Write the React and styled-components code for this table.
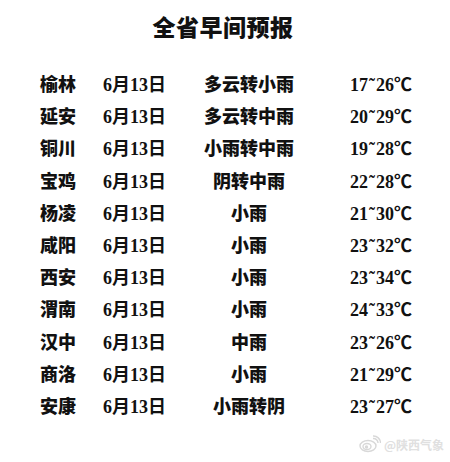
import React from 'react'
import styled, { createGlobalStyle } from 'styled-components'

const GlobalStyle = createGlobalStyle`
  html, body {
    margin: 0;
    padding: 0;
    background: #ffffff;
  }
  body {
    font-family: "Liberation Serif", "Noto Sans CJK SC", serif;
  }
`

const Page = styled.div`
  width: 450px;
  height: 462px;
  background: #ffffff;
  color: #111111;
  padding-top: 11px;
  box-sizing: border-box;
  overflow: hidden;
`

const Title = styled.h1`
  margin: 0 0 0 -4px;
  text-align: center;
  font-family: "Noto Sans CJK SC", sans-serif;
  font-size: 23px;
  font-weight: 900;
  line-height: 30px;
  letter-spacing: 0.5px;
`

const Table = styled.div`
  margin-top: 26px;
  padding-left: 40px;
  display: grid;
  grid-template-columns: 63px 97px 98px 1fr;
  grid-auto-rows: 32.2px;
  align-items: center;
  font-size: 18px;
  font-weight: 700;
`

const Cell = styled.div`
  white-space: nowrap;
  text-align: ${(p) => p.$align || 'left'};
  padding-left: ${(p) => p.$indent || 0}px;
  font-family: ${(p) => (p.$cjk ? '"Noto Sans CJK SC", sans-serif' : '"Liberation Serif", "Noto Sans CJK SC", serif')};
  font-weight: ${(p) => (p.$cjk ? 900 : 700)};
`

const Tilde = styled.span`
  display: inline-block;
  margin: 0 1px;
`

const Footer = styled.div`
  display: flex;
  justify-content: flex-end;
  align-items: center;
  gap: 3px;
  margin-top: 14px;
  padding-right: 6px;
  color: #e0e0e0;
  font-family: "Noto Sans CJK SC", sans-serif;
  font-size: 12px;
  font-weight: 700;
`

const rows = [
  ['榆林', '多云转小雨', '17', '26'],
  ['延安', '多云转中雨', '20', '29'],
  ['铜川', '小雨转中雨', '19', '28'],
  ['宝鸡', '阴转中雨', '22', '28'],
  ['杨凌', '小雨', '21', '30'],
  ['咸阳', '小雨', '23', '32'],
  ['西安', '小雨', '23', '34'],
  ['渭南', '小雨', '24', '33'],
  ['汉中', '中雨', '23', '26'],
  ['商洛', '小雨', '21', '29'],
  ['安康', '小雨转阴', '23', '27'],
]

const WeiboLogo = () => (
  <svg width="22" height="18" viewBox="0 0 22 18" fill="none" stroke="#d8d8d8" strokeWidth="1.4">
    <ellipse cx="9" cy="11" rx="8" ry="5.5" />
    <ellipse cx="8" cy="11.5" rx="4" ry="3" />
    <circle cx="7.5" cy="12" r="1" fill="#d8d8d8" />
    <path d="M14 3.5 a4.5 4.5 0 0 1 5 4.5" />
    <path d="M14 1 a7 7 0 0 1 7.5 7" />
  </svg>
)

export default function App() {
  return (
    <Page>
      <GlobalStyle />
      <Title>全省早间预报</Title>
      <Table>
        {rows.map(([city, weather, lo, hi]) => (
          <React.Fragment key={city}>
            <Cell $cjk>{city}</Cell>
            <Cell>6月13日</Cell>
            <Cell $cjk $align="center">{weather}</Cell>
            <Cell $indent={52}>
              {lo}
              <Tilde>˜</Tilde>
              {hi}℃
            </Cell>
          </React.Fragment>
        ))}
      </Table>
      <Footer>
        <WeiboLogo />
        <span>@陕西气象</span>
      </Footer>
    </Page>
  )
}
